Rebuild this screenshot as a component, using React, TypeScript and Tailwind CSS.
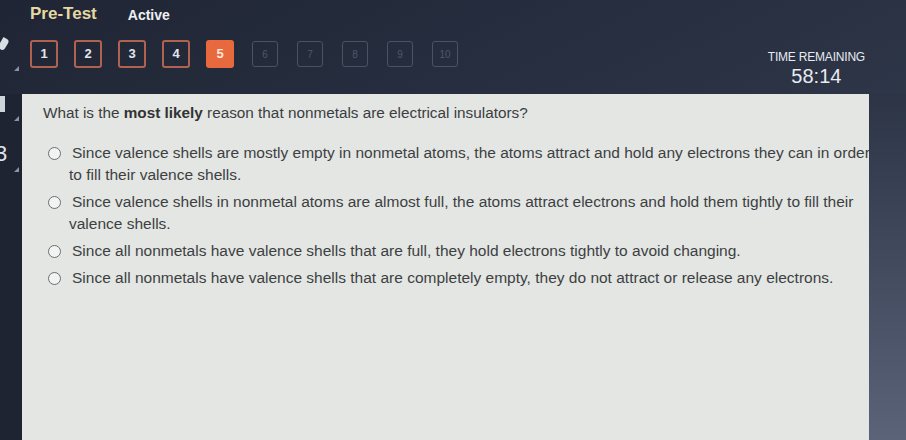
import React from "react";

const options = [
  "Since valence shells are mostly empty in nonmetal atoms, the atoms attract and hold any electrons they can in order to fill their valence shells.",
  "Since valence shells in nonmetal atoms are almost full, the atoms attract electrons and hold them tightly to fill their valence shells.",
  "Since all nonmetals have valence shells that are full, they hold electrons tightly to avoid changing.",
  "Since all nonmetals have valence shells that are completely empty, they do not attract or release any electrons.",
];

function QButton({ n, state }: { n: number; state: "done" | "current" | "locked" }) {
  if (state === "current") {
    return (
      <div className="w-[28px] h-[28px] rounded-[3px] bg-[#e9693f] flex items-center justify-center text-[13px] font-bold text-[#fde5d8]">
        {n}
      </div>
    );
  }
  if (state === "done") {
    return (
      <div className="w-[28px] h-[28px] rounded-[3px] border-2 border-[#b0624f] flex items-center justify-center text-[13px] font-bold text-[#e4e6ec]">
        {n}
      </div>
    );
  }
  return (
    <div className="w-[26px] h-[26px] rounded-[3px] border border-[#4a5366] flex items-center justify-center text-[10px] text-[#4f586b]">
      {n}
    </div>
  );
}

export default function App() {
  return (
    <div
      className="w-[906px] h-[440px] overflow-hidden flex flex-col bg-gradient-to-br from-[#1f2534] via-[#2a3244] to-[#3c4559]"
      style={{ fontFamily: '"Liberation Sans", Arial, sans-serif' }}
    >
      {/* top bar */}
      <div className="flex items-center pl-[30px] pt-[3px] h-[24px]">
        <span className="text-[17px] font-bold text-[#e6d9a2] leading-none">Pre-Test</span>
        <span className="ml-[31px] mt-[3px] text-[14px] font-bold text-[#eef0f4] leading-none">Active</span>
      </div>

      {/* question nav + timer */}
      <div className="flex items-start h-[70px]">
        <div className="w-[22px] h-full flex flex-col items-start pt-[14px]">
          <div className="w-[7px] h-[12px] bg-[#d9dde4] rounded-r-[3px] rotate-[30deg]" />
          <div className="ml-[14px] mt-[16px] w-0 h-0 border-l-[5px] border-l-transparent border-b-[5px] border-b-[#8a92a3]" />
        </div>
        <div className="flex items-center pt-[16px] pl-[8px]">
          <div className="flex gap-[16px]">
            {[1, 2, 3, 4].map((n) => (
              <QButton key={n} n={n} state="done" />
            ))}
            <QButton n={5} state="current" />
          </div>
          <div className="flex gap-[19px] ml-[18px]">
            {[6, 7, 8, 9, 10].map((n) => (
              <QButton key={n} n={n} state="locked" />
            ))}
          </div>
        </div>
        <div className="ml-auto mr-[41px] pt-[27px] flex flex-col items-center">
          <span className="text-[12px] text-[#e8ebf0] leading-none tracking-[-0.2px]">TIME REMAINING</span>
          <span className="text-[20px] text-[#e8ebf0] leading-none mt-[3px]">58:14</span>
        </div>
      </div>

      {/* main panel */}
      <div className="flex flex-1">
        <div className="w-[22px] bg-[#1e2431] flex flex-col">
          <div className="h-[16px] w-[5px] bg-[#cfd4dc] mt-[2px]" />
          <div className="ml-[14px] mt-[4px] w-0 h-0 border-l-[5px] border-l-transparent border-b-[5px] border-b-[#8a92a3]" />
          <div className="mt-[22px] -ml-[5px] text-[#dfe3ea] text-[22px] leading-none">3</div>
          <div className="ml-[14px] mt-[2px] w-0 h-0 border-l-[5px] border-l-transparent border-b-[5px] border-b-[#8a92a3]" />
        </div>
        <div className="w-[847px] bg-[#e3e6e3] overflow-hidden pt-[9px]">
          <p className="pl-[21px] text-[15.3px] text-[#3b3d40] leading-[20px] whitespace-nowrap">
            What is the <b className="text-[#333]">most likely</b> reason that nonmetals are electrical insulators?
          </p>
          <div className="mt-[21px] flex flex-col gap-[7px] w-[880px]">
            {options.map((o, i) => (
              <div key={i} className="flex items-start">
                <div className="w-[39px] flex justify-end pt-[3px]">
                  <div className="w-[13px] h-[13px] rounded-full border-[1.5px] border-[#6b6e72] bg-[#f2f3f2]" />
                </div>
                <p className="ml-[8px] w-[808px] text-[15.5px] text-[#3d3f42] leading-[22px] -mt-[2px] indent-[3px]">{o}</p>
              </div>
            ))}
          </div>
        </div>
        <div className="flex-1 bg-gradient-to-b from-[#2c3446] to-[#5b6379]" />
      </div>
    </div>
  );
}
